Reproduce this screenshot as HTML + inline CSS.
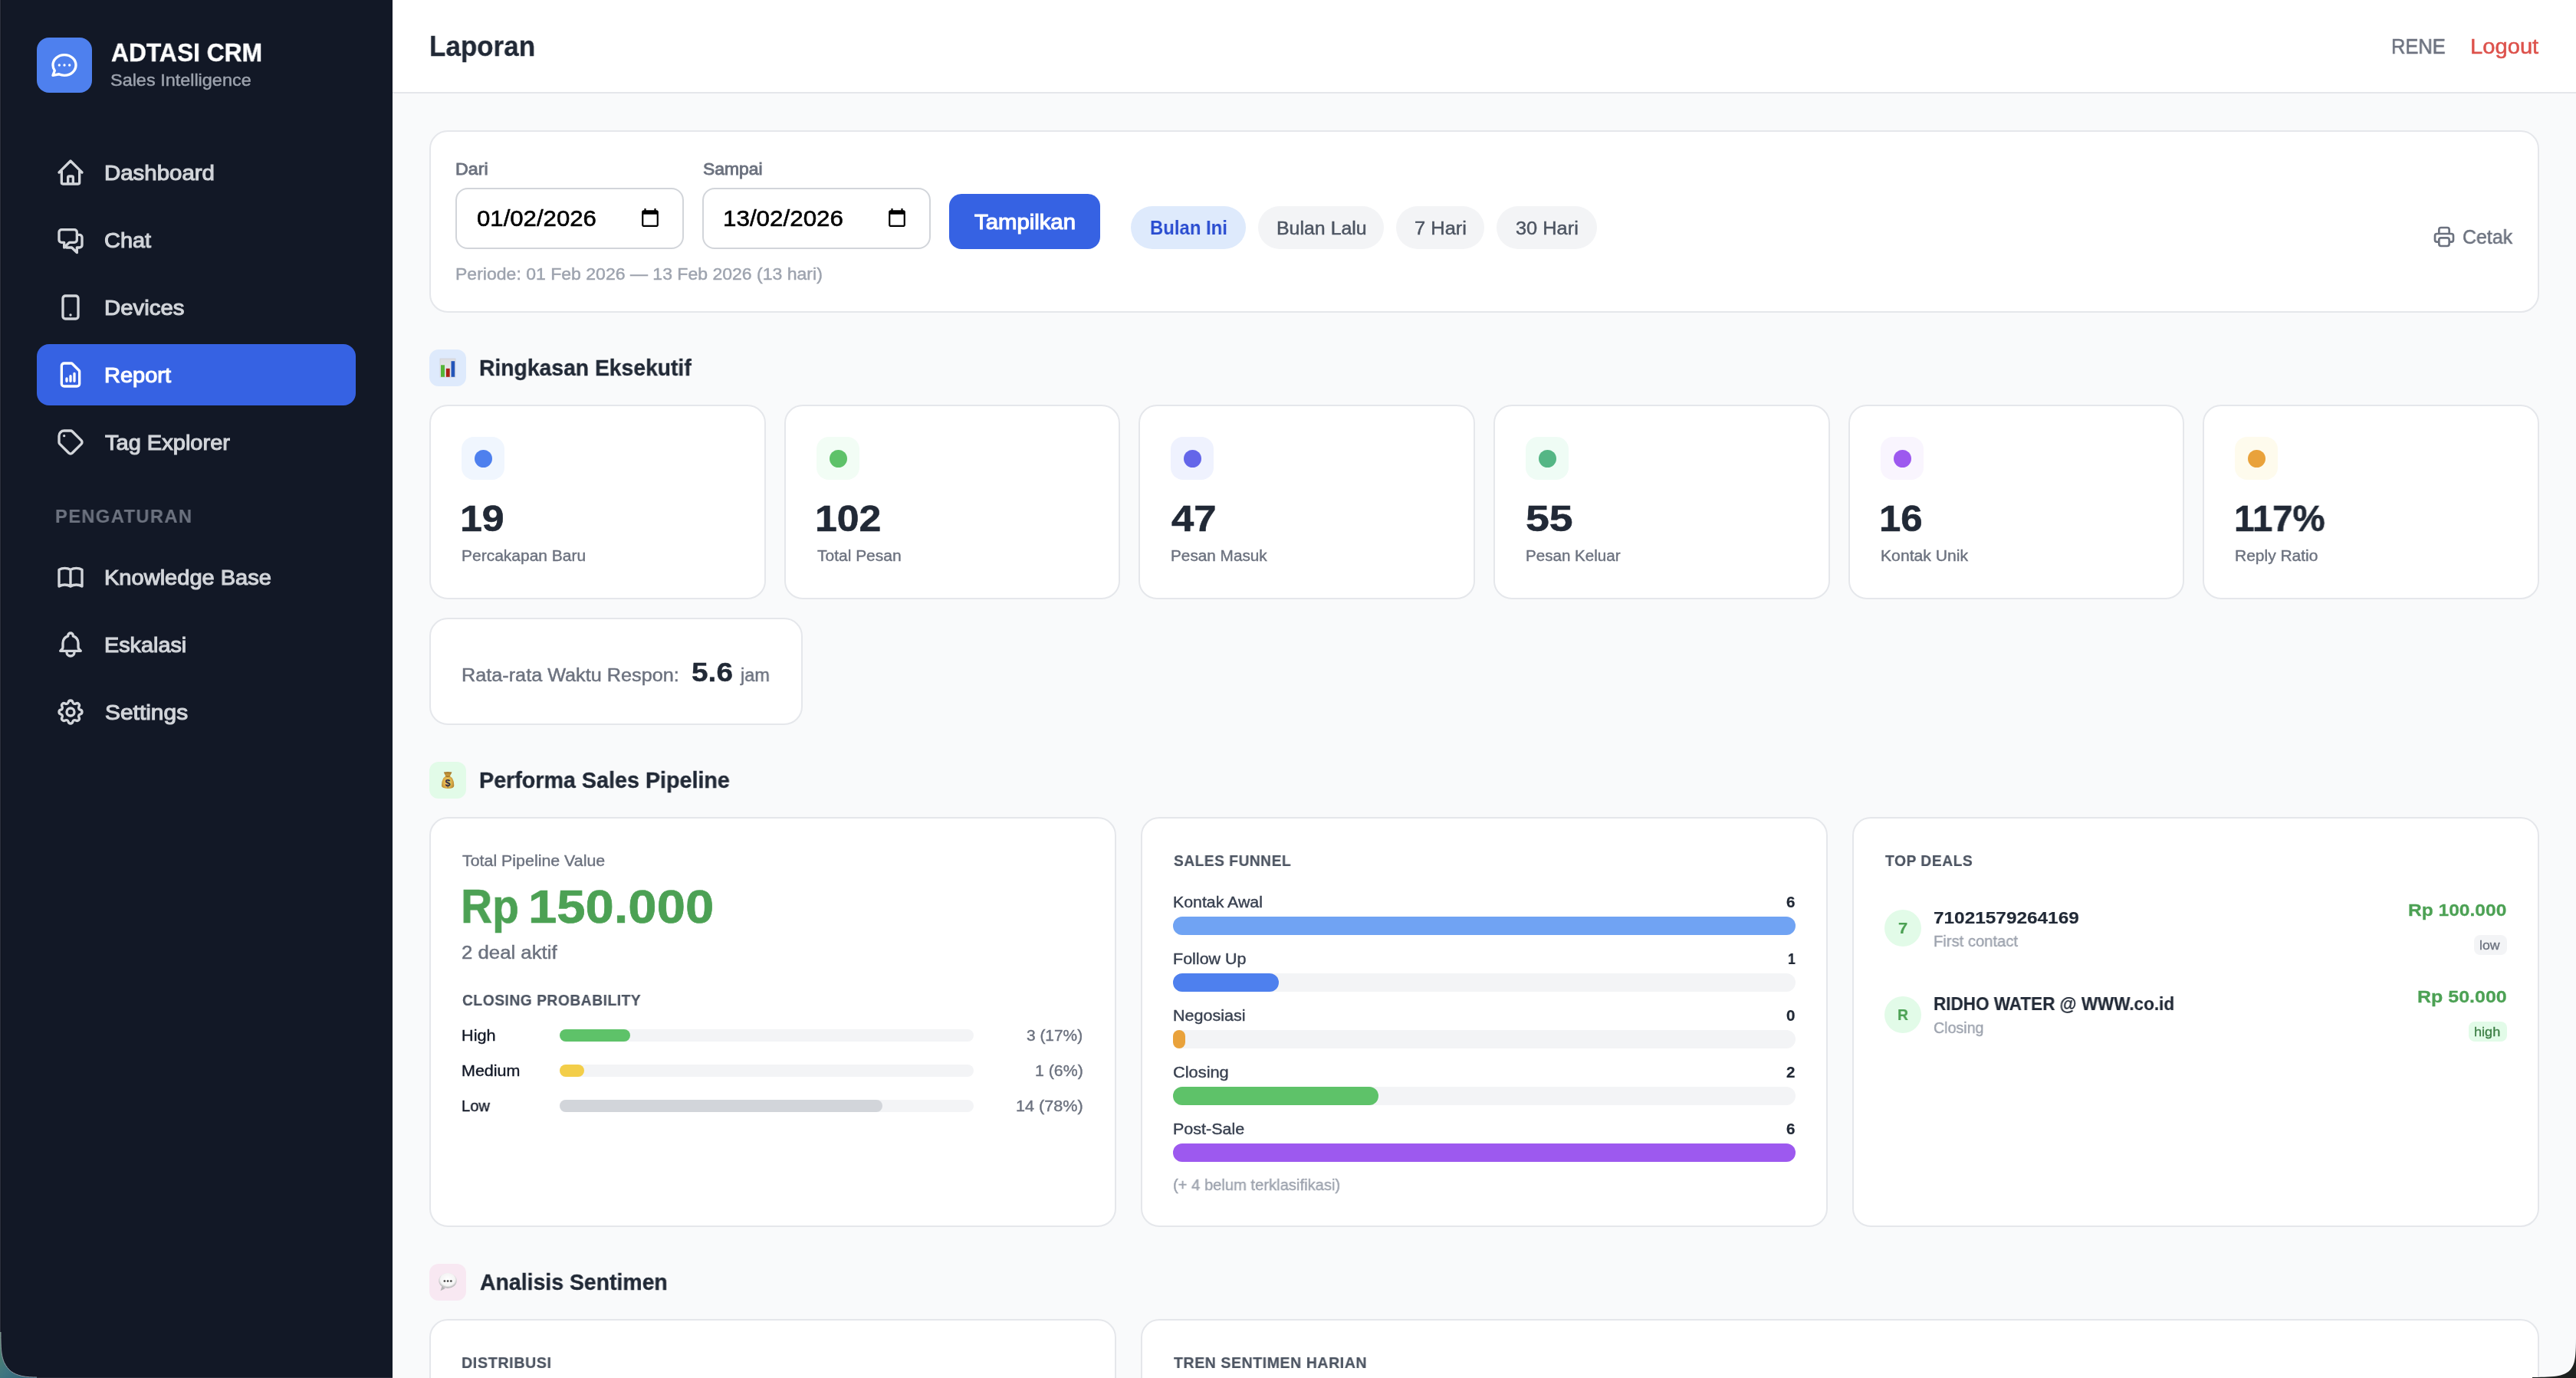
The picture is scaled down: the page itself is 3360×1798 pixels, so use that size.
<!DOCTYPE html>
<html><head><meta charset="utf-8"><title>Laporan</title>
<style>
html,body{margin:0;padding:0;overflow:hidden;}
body{width:3360px;height:1798px;overflow:hidden;position:relative;background:#f9fafb;font-family:"Liberation Sans",sans-serif;}
.b{position:absolute;}
.t{position:absolute;white-space:pre;line-height:1;font-weight:400;transform-origin:0 0;will-change:transform;}
#w{position:absolute;left:0;top:0;width:3360px;height:1798px;overflow:hidden;background:#f9fafb;}
</style></head><body>
<div id="w">
<div class="b" style="left:0px;top:0px;width:512px;height:1798px;background:#121826;"></div>
<div class="b" style="left:48px;top:49px;width:72px;height:72px;background:#4e80ee;border-radius:16px;"></div>
<svg class="b" style="left:64px;top:65px" width="40" height="40" viewBox="0 0 24 24" fill="none" stroke="#fff" stroke-width="2" stroke-linecap="round" stroke-linejoin="round"><path d="M8 12h.01M12 12h.01M16 12h.01M21 12c0 4.418-4.03 8-9 8a9.863 9.863 0 01-4.255-.949L3 20l1.395-3.72C3.512 15.042 3 13.574 3 12c0-4.418 4.03-8 9-8s9 3.582 9 8z"/></svg>
<span class="t" id="brand" style="left:145.00px;top:52.00px;font-size:33.26px;color:#fff;font-weight:700;transform:scaleX(0.9557);-webkit-text-stroke:0.38px #fff;">ADTASI CRM</span>
<span class="t" id="brand2" style="left:143.50px;top:94.00px;font-size:22.61px;color:#9da3ae;transform:scaleX(1.0364);-webkit-text-stroke:0.44px #9da3ae;">Sales Intelligence</span>
<svg class="b" style="left:72px;top:205px" width="40" height="40" viewBox="0 0 24 24" fill="none" stroke="#d2d5da" stroke-width="2" stroke-linecap="round" stroke-linejoin="round"><path d="M3 12l2-2m0 0l7-7 7 7M5 10v10a1 1 0 001 1h3m10-11l2 2m-2-2v10a1 1 0 01-1 1h-3m-6 0a1 1 0 001-1v-4a1 1 0 011-1h2a1 1 0 011 1v4a1 1 0 001 1m-6 0h6"/></svg>
<span class="t" id="nav0" style="left:136.00px;top:212.00px;font-size:27.96px;color:#d2d5da;transform:scaleX(1.0525);-webkit-text-stroke:1.12px #d2d5da;">Dashboard</span>
<svg class="b" style="left:72px;top:293px" width="40" height="40" viewBox="0 0 24 24" fill="none" stroke="#d2d5da" stroke-width="2" stroke-linecap="round" stroke-linejoin="round"><path d="M17 8h2a2 2 0 012 2v6a2 2 0 01-2 2h-2v4l-4-4H9a1.994 1.994 0 01-1.414-.586m0 0L11 14h4a2 2 0 002-2V6a2 2 0 00-2-2H5a2 2 0 00-2 2v6a2 2 0 002 2h2v4l.586-.586z"/></svg>
<span class="t" id="nav1" style="left:136.00px;top:300.00px;font-size:27.96px;color:#d2d5da;transform:scaleX(1.0348);-webkit-text-stroke:1.12px #d2d5da;">Chat</span>
<svg class="b" style="left:72px;top:381px" width="40" height="40" viewBox="0 0 24 24" fill="none" stroke="#d2d5da" stroke-width="2" stroke-linecap="round" stroke-linejoin="round"><path d="M12 18h.01M8 21h8a2 2 0 002-2V5a2 2 0 00-2-2H8a2 2 0 00-2 2v14a2 2 0 002 2z"/></svg>
<span class="t" id="nav2" style="left:136.00px;top:388.00px;font-size:27.96px;color:#d2d5da;transform:scaleX(1.0518);-webkit-text-stroke:1.12px #d2d5da;">Devices</span>
<div class="b" style="left:48px;top:449px;width:416px;height:80px;background:#3662e3;border-radius:16px;"></div>
<svg class="b" style="left:72px;top:469px" width="40" height="40" viewBox="0 0 24 24" fill="none" stroke="#fff" stroke-width="2" stroke-linecap="round" stroke-linejoin="round"><path d="M9 17v-2m3 2v-4m3 4v-6m2 10H7a2 2 0 01-2-2V5a2 2 0 012-2h5.586a1 1 0 01.707.293l5.414 5.414a1 1 0 01.293.707V19a2 2 0 01-2 2z"/></svg>
<span class="t" id="nav3" style="left:136.00px;top:476.00px;font-size:27.96px;color:#fff;transform:scaleX(1.0376);-webkit-text-stroke:1.12px #fff;">Report</span>
<svg class="b" style="left:72px;top:557px" width="40" height="40" viewBox="0 0 24 24" fill="none" stroke="#d2d5da" stroke-width="2" stroke-linecap="round" stroke-linejoin="round"><path d="M7 7h.01M7 3h5c.512 0 1.024.195 1.414.586l7 7a2 2 0 010 2.828l-7 7a2 2 0 01-2.828 0l-7-7A1.994 1.994 0 013 12V7a4 4 0 014-4z"/></svg>
<span class="t" id="nav4" style="left:137.00px;top:564.00px;font-size:27.96px;color:#d2d5da;transform:scaleX(1.0384);-webkit-text-stroke:1.12px #d2d5da;">Tag Explorer</span>
<svg class="b" style="left:72px;top:733px" width="40" height="40" viewBox="0 0 24 24" fill="none" stroke="#d2d5da" stroke-width="2" stroke-linecap="round" stroke-linejoin="round"><path d="M12 6.253v13m0-13C10.832 5.477 9.246 5 7.5 5S4.168 5.477 3 6.253v13C4.168 18.477 5.754 18 7.5 18s3.332.477 4.5 1.253m0-13C13.168 5.477 14.754 5 16.5 5c1.747 0 3.332.477 4.5 1.253v13C19.832 18.477 18.247 18 16.5 18c-1.746 0-3.332.477-4.5 1.253"/></svg>
<span class="t" id="nav5" style="left:136.00px;top:740.00px;font-size:27.96px;color:#d2d5da;transform:scaleX(1.0388);-webkit-text-stroke:1.12px #d2d5da;">Knowledge Base</span>
<svg class="b" style="left:72px;top:821px" width="40" height="40" viewBox="0 0 24 24" fill="none" stroke="#d2d5da" stroke-width="2" stroke-linecap="round" stroke-linejoin="round"><path d="M15 17h5l-1.405-1.405A2.032 2.032 0 0118 14.158V11a6.002 6.002 0 00-4-5.659V5a2 2 0 10-4 0v.341C7.67 6.165 6 8.388 6 11v3.159c0 .538-.214 1.055-.595 1.436L4 17h5m6 0v1a3 3 0 11-6 0v-1m6 0H9"/></svg>
<span class="t" id="nav6" style="left:136.00px;top:828.00px;font-size:27.96px;color:#d2d5da;transform:scaleX(1.0301);-webkit-text-stroke:1.12px #d2d5da;">Eskalasi</span>
<svg class="b" style="left:72px;top:909px" width="40" height="40" viewBox="0 0 24 24" fill="none" stroke="#d2d5da" stroke-width="2" stroke-linecap="round" stroke-linejoin="round"><path d="M10.325 4.317c.426-1.756 2.924-1.756 3.35 0a1.724 1.724 0 002.573 1.066c1.543-.94 3.31.826 2.37 2.37a1.724 1.724 0 001.065 2.572c1.756.426 1.756 2.924 0 3.35a1.724 1.724 0 00-1.066 2.573c.94 1.543-.826 3.31-2.37 2.37a1.724 1.724 0 00-2.572 1.065c-.426 1.756-2.924 1.756-3.35 0a1.724 1.724 0 00-2.573-1.066c-1.543.94-3.31-.826-2.37-2.37a1.724 1.724 0 00-1.065-2.572c-1.756-.426-1.756-2.924 0-3.35a1.724 1.724 0 001.066-2.573c-.94-1.543.826-3.31 2.37-2.37.996.608 2.296.07 2.572-1.065z"/><path d="M15 12a3 3 0 11-6 0 3 3 0 016 0z"/></svg>
<span class="t" id="nav7" style="left:137.00px;top:916.00px;font-size:27.96px;color:#d2d5da;transform:scaleX(1.0701);-webkit-text-stroke:1.12px #d2d5da;">Settings</span>
<span class="t" id="peng" style="left:72.25px;top:662.00px;font-size:24.04px;color:#6c727f;font-weight:700;letter-spacing:1.4px;transform:scaleX(0.9871);-webkit-text-stroke:0.18px #6c727f;">PENGATURAN</span>
<div class="b" style="left:512px;top:0px;width:2848px;height:120px;background:#fff;"></div>
<div class="b" style="left:512px;top:120px;width:2848px;height:2px;background:#e5e7eb;"></div>
<span class="t" id="title" style="left:560.00px;top:42.00px;font-size:37.62px;color:#212936;font-weight:700;transform:scaleX(0.9302);-webkit-text-stroke:0.29px #212936;">Laporan</span>
<span class="t" id="rene" style="left:3119.00px;top:47.00px;font-size:27.75px;color:#6c727f;transform:scaleX(0.9181);-webkit-text-stroke:0.54px #6c727f;">RENE</span>
<span class="t" id="logout" style="left:3221.70px;top:47.00px;font-size:27.75px;color:#dd524c;transform:scaleX(1.0512);-webkit-text-stroke:0.54px #dd524c;">Logout</span>
<div class="b" style="left:560px;top:170px;width:2752px;height:238px;background:#fff;border:2px solid #e5e7eb;border-radius:24px;box-sizing:border-box;"></div>
<span class="t" id="dari" style="left:594.00px;top:210.00px;font-size:21.97px;color:#6c727f;transform:scaleX(1.0589);-webkit-text-stroke:0.88px #6c727f;">Dari</span>
<span class="t" id="sampai" style="left:916.75px;top:210.00px;font-size:21.97px;color:#6c727f;transform:scaleX(1.0427);-webkit-text-stroke:0.88px #6c727f;">Sampai</span>
<div class="b" style="left:594px;top:245px;width:298px;height:80px;background:#fff;border:2px solid #d2d5da;border-radius:16px;box-sizing:border-box;"></div>
<span class="t" id="date0" style="left:622.25px;top:271.00px;font-size:28.77px;color:#000;transform:scaleX(1.0827);-webkit-text-stroke:0.56px #000;">01/02/2026</span>
<svg class="b" style="left:834.8px;top:270.9px" width="26" height="26" viewBox="0 0 24 24"><path fill="#000" stroke="none" d="M20 3h-1V1h-2v2H7V1H5v2H4c-1.1 0-2 .9-2 2v16c0 1.1.9 2 2 2h16c1.1 0 2-.9 2-2V5c0-1.1-.9-2-2-2zm0 18H4V8h16v13z"/></svg>
<div class="b" style="left:916px;top:245px;width:298px;height:80px;background:#fff;border:2px solid #d2d5da;border-radius:16px;box-sizing:border-box;"></div>
<span class="t" id="date1" style="left:943.00px;top:271.00px;font-size:28.77px;color:#000;transform:scaleX(1.0903);-webkit-text-stroke:0.56px #000;">13/02/2026</span>
<svg class="b" style="left:1156.6px;top:270.9px" width="26" height="26" viewBox="0 0 24 24"><path fill="#000" stroke="none" d="M20 3h-1V1h-2v2H7V1H5v2H4c-1.1 0-2 .9-2 2v16c0 1.1.9 2 2 2h16c1.1 0 2-.9 2-2V5c0-1.1-.9-2-2-2zm0 18H4V8h16v13z"/></svg>
<div class="b" style="left:1238px;top:253px;width:197px;height:72px;background:#3662e3;border-radius:16px;"></div>
<span class="t" id="tampil" style="left:1271.25px;top:276.00px;font-size:27.96px;color:#fff;transform:scaleX(1.0487);-webkit-text-stroke:1.12px #fff;">Tampilkan</span>
<div class="b" style="left:1475px;top:269px;width:150px;height:56px;background:#deeafc;border-radius:28px;"></div>
<span class="t" id="chip0" style="left:1499.50px;top:285.00px;font-size:25.36px;color:#2a4dd0;font-weight:700;transform:scaleX(0.9428);">Bulan Ini</span>
<div class="b" style="left:1641px;top:269px;width:164px;height:56px;background:#f3f4f6;border-radius:28px;"></div>
<span class="t" id="chip1" style="left:1664.70px;top:286.00px;font-size:24.66px;color:#4d5562;transform:scaleX(1.0103);-webkit-text-stroke:0.48px #4d5562;">Bulan Lalu</span>
<div class="b" style="left:1821px;top:269px;width:115px;height:56px;background:#f3f4f6;border-radius:28px;"></div>
<span class="t" id="chip2" style="left:1844.70px;top:286.00px;font-size:24.66px;color:#4d5562;transform:scaleX(1.0339);-webkit-text-stroke:0.48px #4d5562;">7 Hari</span>
<div class="b" style="left:1952px;top:269px;width:131px;height:56px;background:#f3f4f6;border-radius:28px;"></div>
<span class="t" id="chip3" style="left:1977.00px;top:286.00px;font-size:24.66px;color:#4d5562;transform:scaleX(1.0289);-webkit-text-stroke:0.48px #4d5562;">30 Hari</span>
<svg class="b" style="left:3172px;top:293px" width="32" height="32" viewBox="0 0 24 24" fill="none" stroke="#6c727f" stroke-width="2" stroke-linecap="round" stroke-linejoin="round"><path d="M17 17h2a2 2 0 002-2v-4a2 2 0 00-2-2H5a2 2 0 00-2 2v4a2 2 0 002 2h2m2 4h6a2 2 0 002-2v-4a2 2 0 00-2-2H9a2 2 0 00-2 2v4a2 2 0 002 2zm8-12V5a2 2 0 00-2-2H9a2 2 0 00-2 2v4h10z"/></svg>
<span class="t" id="cetak" style="left:3211.80px;top:297.00px;font-size:25.69px;color:#6c727f;transform:scaleX(0.9704);-webkit-text-stroke:0.5px #6c727f;">Cetak</span>
<span class="t" id="periode" style="left:594.00px;top:347.00px;font-size:22.61px;color:#9da3ae;transform:scaleX(1.0186);-webkit-text-stroke:0.44px #9da3ae;">Periode: 01 Feb 2026 — 13 Feb 2026 (13 hari)</span>
<div class="b" style="left:560px;top:456px;width:48px;height:48px;background:#deeafc;border-radius:12px;"></div>
<svg class="b" style="left:572px;top:466px" width="24" height="28" viewBox="0 0 24 28"><defs><linearGradient id="cg" x1="0" y1="0" x2="0" y2="1"><stop offset="0" stop-color="#dcdde1"/><stop offset="1" stop-color="#e9ebf1"/></linearGradient></defs><rect x="2" y="2" width="20" height="24" fill="url(#cg)" stroke="#d2d3d8" stroke-width="0.8"/><rect x="3" y="10.3" width="5" height="15.5" fill="#55b437"/><rect x="9.8" y="14.8" width="4.9" height="11" fill="#aa2014"/><rect x="16.5" y="5.2" width="4.7" height="20.6" fill="#2355b9"/></svg>
<span class="t" id="h1" style="left:624.75px;top:466.00px;font-size:29.1px;color:#212936;font-weight:700;transform:scaleX(0.9724);-webkit-text-stroke:0.34px #212936;">Ringkasan Eksekutif</span>
<div class="b" style="left:560px;top:994px;width:48px;height:48px;background:#e2fbe8;border-radius:12px;"></div>
<svg class="b" style="left:572px;top:1004px" width="24" height="28" viewBox="0 0 24 28"><defs><radialGradient id="bg" cx="0.48" cy="0.62" r="0.6"><stop offset="0" stop-color="#f5e07c"/><stop offset="0.55" stop-color="#dcae48"/><stop offset="1" stop-color="#a87a2c"/></radialGradient></defs><path d="M6.8 3.6 Q12 2.4 17.5 3.6 L14.9 8.8 Q20.2 11.5 20.3 21 Q20.3 24.9 12 24.9 Q3.9 24.9 4 21 Q4.1 11.5 9.2 8.8 Z" fill="url(#bg)"/><path d="M9.4 8.7 Q12 9.6 14.7 8.7" stroke="#8b5e1e" stroke-width="1.1" fill="none"/><text x="12" y="22.4" font-family="Liberation Sans" font-weight="700" font-size="12.5" text-anchor="middle" fill="#2a2540">$</text></svg>
<span class="t" id="h2" style="left:624.75px;top:1004.00px;font-size:29.1px;color:#212936;font-weight:700;transform:scaleX(0.9859);-webkit-text-stroke:0.34px #212936;">Performa Sales Pipeline</span>
<div class="b" style="left:560px;top:1649px;width:48px;height:48px;background:#f8e8f2;border-radius:12px;"></div>
<svg class="b" style="left:571px;top:1660px" width="26" height="26" viewBox="0 0 26 26"><defs><radialGradient id="sg" cx="0.5" cy="0.42" r="0.58"><stop offset="0" stop-color="#ffffff"/><stop offset="0.7" stop-color="#f4f4f4"/><stop offset="1" stop-color="#a9a9ab"/></radialGradient></defs><path d="M3.5 24.2 L5.6 18 L9.6 21.2 Z" fill="#b4b4b6"/><ellipse cx="13" cy="11" rx="11.7" ry="10" fill="url(#sg)"/><circle cx="8.9" cy="11.5" r="1.35" fill="#3c3c3c"/><circle cx="13.1" cy="11.5" r="1.35" fill="#3c3c3c"/><circle cx="17.3" cy="11.5" r="1.35" fill="#3c3c3c"/></svg>
<span class="t" id="h3" style="left:625.75px;top:1659.00px;font-size:29.1px;color:#212936;font-weight:700;transform:scaleX(0.9767);-webkit-text-stroke:0.34px #212936;">Analisis Sentimen</span>
<div class="b" style="left:560px;top:528px;width:439px;height:254px;background:#fff;border:2px solid #e5e7eb;border-radius:24px;box-sizing:border-box;"></div>
<div class="b" style="left:602px;top:570px;width:56px;height:56px;background:#f0f6fe;border-radius:16px;"></div>
<div class="b" style="left:618.5px;top:586.5px;width:23px;height:23px;background:#4e80ee;border-radius:12px;"></div>
<span class="t" id="num0" style="left:599.50px;top:653.00px;font-size:47.81px;color:#212936;font-weight:700;transform:scaleX(1.0857);-webkit-text-stroke:0.55px #212936;">19</span>
<span class="t" id="lab0" style="left:602.00px;top:715.00px;font-size:20.55px;color:#6c727f;transform:scaleX(1.0211);-webkit-text-stroke:0.4px #6c727f;">Percakapan Baru</span>
<div class="b" style="left:1023px;top:528px;width:438px;height:254px;background:#fff;border:2px solid #e5e7eb;border-radius:24px;box-sizing:border-box;"></div>
<div class="b" style="left:1065px;top:570px;width:56px;height:56px;background:#f2fdf5;border-radius:16px;"></div>
<div class="b" style="left:1081.5px;top:586.5px;width:23px;height:23px;background:#5ec269;border-radius:12px;"></div>
<span class="t" id="num1" style="left:1062.50px;top:653.00px;font-size:47.81px;color:#212936;font-weight:700;transform:scaleX(1.0828);-webkit-text-stroke:0.55px #212936;">102</span>
<span class="t" id="lab1" style="left:1066.00px;top:715.00px;font-size:20.55px;color:#6c727f;transform:scaleX(1.0207);-webkit-text-stroke:0.4px #6c727f;">Total Pesan</span>
<div class="b" style="left:1485px;top:528px;width:439px;height:254px;background:#fff;border:2px solid #e5e7eb;border-radius:24px;box-sizing:border-box;"></div>
<div class="b" style="left:1527px;top:570px;width:56px;height:56px;background:#eff2fe;border-radius:16px;"></div>
<div class="b" style="left:1543.5px;top:586.5px;width:23px;height:23px;background:#6466e9;border-radius:12px;"></div>
<span class="t" id="num2" style="left:1527.50px;top:653.00px;font-size:47.81px;color:#212936;font-weight:700;transform:scaleX(1.1013);-webkit-text-stroke:0.55px #212936;">47</span>
<span class="t" id="lab2" style="left:1527.00px;top:715.00px;font-size:20.55px;color:#6c727f;transform:scaleX(1.0098);-webkit-text-stroke:0.4px #6c727f;">Pesan Masuk</span>
<div class="b" style="left:1948px;top:528px;width:439px;height:254px;background:#fff;border:2px solid #e5e7eb;border-radius:24px;box-sizing:border-box;"></div>
<div class="b" style="left:1990px;top:570px;width:56px;height:56px;background:#effcf5;border-radius:16px;"></div>
<div class="b" style="left:2006.5px;top:586.5px;width:23px;height:23px;background:#55b685;border-radius:12px;"></div>
<span class="t" id="num3" style="left:1989.50px;top:653.00px;font-size:47.81px;color:#212936;font-weight:700;transform:scaleX(1.1605);-webkit-text-stroke:0.55px #212936;">55</span>
<span class="t" id="lab3" style="left:1990.00px;top:715.00px;font-size:20.55px;color:#6c727f;transform:scaleX(1.0014);-webkit-text-stroke:0.4px #6c727f;">Pesan Keluar</span>
<div class="b" style="left:2411px;top:528px;width:438px;height:254px;background:#fff;border:2px solid #e5e7eb;border-radius:24px;box-sizing:border-box;"></div>
<div class="b" style="left:2453px;top:570px;width:56px;height:56px;background:#f9f5fe;border-radius:16px;"></div>
<div class="b" style="left:2469.5px;top:586.5px;width:23px;height:23px;background:#9d59ef;border-radius:12px;"></div>
<span class="t" id="num4" style="left:2450.50px;top:653.00px;font-size:47.81px;color:#212936;font-weight:700;transform:scaleX(1.0660);-webkit-text-stroke:0.55px #212936;">16</span>
<span class="t" id="lab4" style="left:2453.00px;top:715.00px;font-size:20.55px;color:#6c727f;transform:scaleX(1.0297);-webkit-text-stroke:0.4px #6c727f;">Kontak Unik</span>
<div class="b" style="left:2873px;top:528px;width:439px;height:254px;background:#fff;border:2px solid #e5e7eb;border-radius:24px;box-sizing:border-box;"></div>
<div class="b" style="left:2915px;top:570px;width:56px;height:56px;background:#fefbed;border-radius:16px;"></div>
<div class="b" style="left:2931.5px;top:586.5px;width:23px;height:23px;background:#e9a23b;border-radius:12px;"></div>
<span class="t" id="num5" style="left:2913.50px;top:653.00px;font-size:47.81px;color:#212936;font-weight:700;transform:scaleX(0.9932);-webkit-text-stroke:0.55px #212936;">117%</span>
<span class="t" id="lab5" style="left:2915.00px;top:715.00px;font-size:20.55px;color:#6c727f;transform:scaleX(1.0210);-webkit-text-stroke:0.4px #6c727f;">Reply Ratio</span>
<div class="b" style="left:560px;top:806px;width:487px;height:140px;background:#fff;border:2px solid #e5e7eb;border-radius:24px;box-sizing:border-box;"></div>
<span class="t" id="rata" style="left:602.00px;top:869.00px;font-size:24.66px;color:#6c727f;transform:scaleX(1.0234);-webkit-text-stroke:0.48px #6c727f;">Rata-rata Waktu Respon:</span>
<span class="t" id="rata2" style="left:902.00px;top:860.00px;font-size:35.85px;color:#212936;font-weight:700;transform:scaleX(1.0849);-webkit-text-stroke:0.41px #212936;">5.6</span>
<span class="t" id="rata3" style="left:966.00px;top:869.00px;font-size:24.66px;color:#6c727f;transform:scaleX(0.9524);-webkit-text-stroke:0.48px #6c727f;">jam</span>
<div class="b" style="left:560px;top:1066px;width:896px;height:534.5px;background:#fff;border:2px solid #e5e7eb;border-radius:24px;box-sizing:border-box;"></div>
<div class="b" style="left:1488px;top:1066px;width:896px;height:534.5px;background:#fff;border:2px solid #e5e7eb;border-radius:24px;box-sizing:border-box;"></div>
<div class="b" style="left:2416px;top:1066px;width:896px;height:534.5px;background:#fff;border:2px solid #e5e7eb;border-radius:24px;box-sizing:border-box;"></div>
<span class="t" id="tpv" style="left:603.00px;top:1113.00px;font-size:20.55px;color:#6c727f;transform:scaleX(1.0404);-webkit-text-stroke:0.4px #6c727f;">Total Pipeline Value</span>
<span class="t" id="rp" style="left:601.00px;top:1152.00px;font-size:62.35px;color:#4ca154;font-weight:700;transform:scaleX(0.9120);-webkit-text-stroke:0.72px #4ca154;">Rp</span>
<span class="t" id="rpn" style="left:688.50px;top:1153.00px;font-size:60.28px;color:#4ca154;font-weight:700;transform:scaleX(1.1115);-webkit-text-stroke:0.7px #4ca154;">150.000</span>
<span class="t" id="deal" style="left:602.00px;top:1231.00px;font-size:24.66px;color:#6c727f;transform:scaleX(1.0446);-webkit-text-stroke:0.48px #6c727f;">2 deal aktif</span>
<span class="t" id="cp" style="left:603.00px;top:1295.00px;font-size:20.78px;color:#4d5562;font-weight:700;letter-spacing:0.6px;transform:scaleX(0.9235);-webkit-text-stroke:0.24px #4d5562;">CLOSING PROBABILITY</span>
<span class="t" id="pl0" style="left:602.00px;top:1341.00px;font-size:20.55px;color:#121826;transform:scaleX(1.0539);-webkit-text-stroke:0.4px #121826;">High</span>
<div class="b" style="left:730px;top:1343px;width:540px;height:16px;background:#f3f4f6;border-radius:8px;"></div>
<div class="b" style="left:730px;top:1343px;width:92px;height:16px;background:#5ec269;border-radius:8px;"></div>
<span class="t" id="pv0" style="left:1339.20px;top:1341.00px;font-size:20.55px;color:#6c727f;transform:scaleX(1.0162);-webkit-text-stroke:0.4px #6c727f;">3 (17%)</span>
<span class="t" id="pl1" style="left:602.00px;top:1387.00px;font-size:20.55px;color:#121826;transform:scaleX(1.0447);-webkit-text-stroke:0.4px #121826;">Medium</span>
<div class="b" style="left:730px;top:1389px;width:540px;height:16px;background:#f3f4f6;border-radius:8px;"></div>
<div class="b" style="left:730px;top:1389px;width:32px;height:16px;background:#f3ce49;border-radius:8px;"></div>
<span class="t" id="pv1" style="left:1349.80px;top:1387.00px;font-size:20.55px;color:#6c727f;transform:scaleX(1.0367);-webkit-text-stroke:0.4px #6c727f;">1 (6%)</span>
<span class="t" id="pl2" style="left:602.00px;top:1433.00px;font-size:20.55px;color:#121826;transform:scaleX(0.9802);-webkit-text-stroke:0.4px #121826;">Low</span>
<div class="b" style="left:730px;top:1435px;width:540px;height:16px;background:#f3f4f6;border-radius:8px;"></div>
<div class="b" style="left:730px;top:1435px;width:421px;height:16px;background:#d2d5da;border-radius:8px;"></div>
<span class="t" id="pv2" style="left:1325.20px;top:1433.00px;font-size:20.55px;color:#6c727f;transform:scaleX(1.0508);-webkit-text-stroke:0.4px #6c727f;">14 (78%)</span>
<span class="t" id="sf" style="left:1530.60px;top:1113.00px;font-size:20.78px;color:#4d5562;font-weight:700;letter-spacing:0.6px;transform:scaleX(0.9199);-webkit-text-stroke:0.24px #4d5562;">SALES FUNNEL</span>
<span class="t" id="fl0" style="left:1529.60px;top:1167.00px;font-size:20.55px;color:#394150;transform:scaleX(1.0371);-webkit-text-stroke:0.4px #394150;">Kontak Awal</span>
<span class="t" id="fc0" style="left:2330.00px;top:1167.00px;font-size:20.27px;color:#212936;font-weight:700;transform:scaleX(1.0167);-webkit-text-stroke:0.23px #212936;">6</span>
<div class="b" style="left:1530px;top:1196px;width:812px;height:24px;background:#f3f4f6;border-radius:12px;"></div>
<div class="b" style="left:1530px;top:1196px;width:812px;height:24px;background:#70a3f3;border-radius:12px;"></div>
<span class="t" id="fl1" style="left:1529.60px;top:1241.00px;font-size:20.55px;color:#394150;transform:scaleX(1.0463);-webkit-text-stroke:0.4px #394150;">Follow Up</span>
<span class="t" id="fc1" style="left:2331.50px;top:1241.00px;font-size:20.27px;color:#212936;font-weight:700;transform:scaleX(0.8711);-webkit-text-stroke:0.23px #212936;">1</span>
<div class="b" style="left:1530px;top:1270px;width:812px;height:24px;background:#f3f4f6;border-radius:12px;"></div>
<div class="b" style="left:1530px;top:1270px;width:138px;height:24px;background:#4e80ee;border-radius:12px;"></div>
<span class="t" id="fl2" style="left:1529.60px;top:1315.00px;font-size:20.55px;color:#394150;transform:scaleX(1.0468);-webkit-text-stroke:0.4px #394150;">Negosiasi</span>
<span class="t" id="fc2" style="left:2330.00px;top:1315.00px;font-size:20.27px;color:#212936;font-weight:700;transform:scaleX(1.0167);-webkit-text-stroke:0.23px #212936;">0</span>
<div class="b" style="left:1530px;top:1344px;width:812px;height:24px;background:#f3f4f6;border-radius:12px;"></div>
<div class="b" style="left:1530px;top:1344px;width:16px;height:24px;background:#e9a23b;border-radius:12px;"></div>
<span class="t" id="fl3" style="left:1529.60px;top:1389.00px;font-size:20.55px;color:#394150;transform:scaleX(1.0615);-webkit-text-stroke:0.4px #394150;">Closing</span>
<span class="t" id="fc3" style="left:2330.00px;top:1389.00px;font-size:20.27px;color:#212936;font-weight:700;transform:scaleX(1.0167);-webkit-text-stroke:0.23px #212936;">2</span>
<div class="b" style="left:1530px;top:1418px;width:812px;height:24px;background:#f3f4f6;border-radius:12px;"></div>
<div class="b" style="left:1530px;top:1418px;width:268px;height:24px;background:#5ec269;border-radius:12px;"></div>
<span class="t" id="fl4" style="left:1529.60px;top:1463.00px;font-size:20.55px;color:#394150;transform:scaleX(1.0473);-webkit-text-stroke:0.4px #394150;">Post-Sale</span>
<span class="t" id="fc4" style="left:2330.00px;top:1463.00px;font-size:20.27px;color:#212936;font-weight:700;transform:scaleX(1.0167);-webkit-text-stroke:0.23px #212936;">6</span>
<div class="b" style="left:1530px;top:1492px;width:812px;height:24px;background:#f3f4f6;border-radius:12px;"></div>
<div class="b" style="left:1530px;top:1492px;width:812px;height:24px;background:#9d59ef;border-radius:12px;"></div>
<span class="t" id="fnote" style="left:1529.60px;top:1536.00px;font-size:20.55px;color:#9da3ae;transform:scaleX(0.9823);-webkit-text-stroke:0.4px #9da3ae;">(+ 4 belum terklasifikasi)</span>
<span class="t" id="td" style="left:2459.00px;top:1113.00px;font-size:20.78px;color:#4d5562;font-weight:700;letter-spacing:0.6px;transform:scaleX(0.9252);-webkit-text-stroke:0.24px #4d5562;">TOP DEALS</span>
<div class="b" style="left:2458px;top:1187px;width:48px;height:48px;background:#e2fbe8;border-radius:24px;"></div>
<span class="t" id="av0" style="left:2476.00px;top:1201.00px;font-size:20.78px;color:#4ca154;font-weight:700;transform:scaleX(1.0570);-webkit-text-stroke:0.24px #4ca154;">7</span>
<span class="t" id="dn0" style="left:2521.75px;top:1187.00px;font-size:22.47px;color:#212936;font-weight:700;transform:scaleX(1.0848);-webkit-text-stroke:0.17px #212936;">71021579264169</span>
<span class="t" id="ds0" style="left:2521.75px;top:1218.00px;font-size:20.55px;color:#9da3ae;transform:scaleX(0.9829);-webkit-text-stroke:0.4px #9da3ae;">First contact</span>
<span class="t" id="da0" style="left:3141.40px;top:1176.00px;font-size:22.86px;color:#4ca154;font-weight:700;transform:scaleX(1.0739);-webkit-text-stroke:0.26px #4ca154;">Rp 100.000</span>
<div class="b" style="left:3227px;top:1220px;width:43px;height:26px;background:#f3f4f6;border-radius:8px;"></div>
<span class="t" id="dc0" style="left:3234.40px;top:1226.00px;font-size:16.96px;color:#6c727f;transform:scaleX(1.0476);-webkit-text-stroke:0.33px #6c727f;">low</span>
<div class="b" style="left:2458px;top:1300px;width:48px;height:48px;background:#e2fbe8;border-radius:24px;"></div>
<span class="t" id="av1" style="left:2474.50px;top:1314.00px;font-size:20.78px;color:#4ca154;font-weight:700;transform:scaleX(0.9341);-webkit-text-stroke:0.24px #4ca154;">R</span>
<span class="t" id="dn1" style="left:2521.75px;top:1299.00px;font-size:22.99px;color:#212936;font-weight:700;transform:scaleX(0.9791);-webkit-text-stroke:0.18px #212936;">RIDHO WATER @ WWW.co.id</span>
<span class="t" id="ds1" style="left:2521.75px;top:1331.00px;font-size:20.55px;color:#9da3ae;transform:scaleX(0.9556);-webkit-text-stroke:0.4px #9da3ae;">Closing</span>
<span class="t" id="da1" style="left:3153.20px;top:1289.00px;font-size:22.86px;color:#4ca154;font-weight:700;transform:scaleX(1.0930);-webkit-text-stroke:0.26px #4ca154;">Rp 50.000</span>
<div class="b" style="left:3220px;top:1333px;width:50px;height:26px;background:#e2fbe8;border-radius:8px;"></div>
<span class="t" id="dc1" style="left:3227.30px;top:1339.00px;font-size:16.96px;color:#3c7e44;transform:scaleX(1.0706);-webkit-text-stroke:0.33px #3c7e44;">high</span>
<div class="b" style="left:560px;top:1721px;width:896px;height:400px;background:#fff;border:2px solid #e5e7eb;border-radius:24px;box-sizing:border-box;"></div>
<div class="b" style="left:1488px;top:1721px;width:1824px;height:400px;background:#fff;border:2px solid #e5e7eb;border-radius:24px;box-sizing:border-box;"></div>
<span class="t" id="dist" style="left:602.00px;top:1768.00px;font-size:20.78px;color:#4d5562;font-weight:700;letter-spacing:0.6px;transform:scaleX(0.9512);-webkit-text-stroke:0.24px #4d5562;">DISTRIBUSI</span>
<span class="t" id="tren" style="left:1530.60px;top:1768.00px;font-size:20.78px;color:#4d5562;font-weight:700;letter-spacing:0.6px;transform:scaleX(0.9402);-webkit-text-stroke:0.24px #4d5562;">TREN SENTIMEN HARIAN</span>
<div class="b" style="left:0px;top:0px;width:1px;height:1798px;background:#2c313f;"></div>
<div class="b" style="left:1px;top:0px;width:1px;height:1798px;background:#10141f;"></div>
<div class="b" style="left:0px;top:1797px;width:512px;height:1px;background:#2a2f3d;"></div>
<svg class="b" style="left:0;top:1730px" width="60" height="68" viewBox="0 1730 60 68"><defs><linearGradient id="wl" x1="0" y1="0" x2="1" y2="1"><stop offset="0" stop-color="#5a8a6a"/><stop offset="0.5" stop-color="#3f7580"/><stop offset="1" stop-color="#2f5f78"/></linearGradient></defs><path d="M0 1738 L1 1738 C1 1760 1.5 1768 5.4 1777.6 C8 1783 11 1786.5 14.4 1789.3 C18 1792 23 1794.3 28.7 1795.5 C35 1796.8 42 1797 48 1797 L48 1798 L0 1798 Z" fill="url(#wl)"/><path d="M1 1738 C1 1760 1.5 1768 5.4 1777.6 C8 1783 11 1786.5 14.4 1789.3 C18 1792 23 1794.3 28.7 1795.5 C35 1796.8 42 1797 48 1797" fill="none" stroke="#9aa0ab" stroke-width="0.9"/></svg>
<svg class="b" style="left:3300px;top:1740px" width="60" height="58" viewBox="3300 1740 60 58"><path d="M3360 1746 C3360 1765 3359 1772 3357.6 1777.6 C3356 1783 3354 1786 3350.6 1789.3 C3347 1792 3342 1794.5 3334.7 1795.5 C3325 1796.8 3312 1797 3303 1797 L3303 1798 L3360 1798 Z" fill="#1d211f"/></svg>
</div>
</body></html>
